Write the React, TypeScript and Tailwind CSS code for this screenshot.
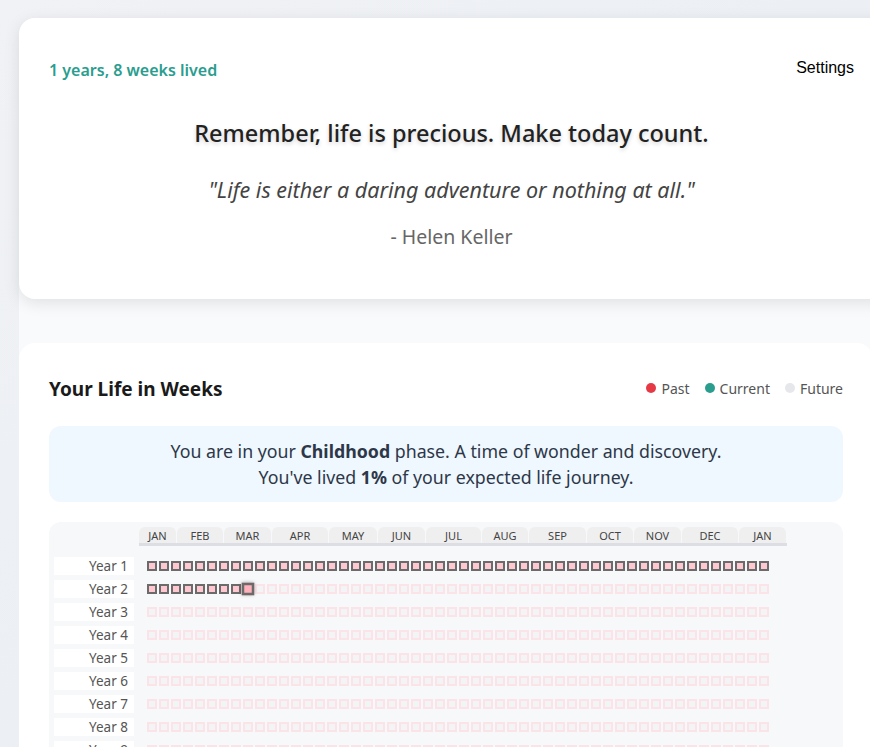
import React from "react";

const months: [string, number][] = [
  ["JAN", 38], ["FEB", 47], ["MAR", 48], ["APR", 57], ["MAY", 49], ["JUN", 48],
  ["JUL", 56], ["AUG", 47], ["SEP", 58], ["OCT", 47], ["NOV", 48], ["DEC", 57], ["JAN", 48],
];

function Cell({ kind }: { kind: "past" | "current" | "future" }) {
  if (kind === "past")
    return <div className="w-[10px] h-[10px] shrink-0 border-2 border-[#6b6b6b] bg-[#ffc8d0]" />;
  if (kind === "current")
    return (
      <div className="w-[10px] h-[10px] shrink-0 border-2 border-[#6a6a6a] bg-[#ffb0bb] scale-[1.25] shadow-[0_0_3px_rgba(0,0,0,0.35)]" />
    );
  return <div className="w-[10px] h-[10px] shrink-0 border-2 border-[#fbe3e7] bg-[#f3f4f6]" />;
}

export default function App() {
  const years = Array.from({ length: 10 }, (_, i) => i + 1);
  return (
    <div className="w-full h-[747px] overflow-hidden bg-gradient-to-br from-[#f0f2f5] via-[#eceff4] to-[#dce2ec] font-['Segoe_UI','Noto_Sans',sans-serif]">
      <div className="pl-[19px] pt-[18px]">
        <div className="w-[876px] bg-[#f9fafb] rounded-2xl">
          {/* Top card */}
          <div className="w-[876px] h-[281px] bg-white rounded-2xl shadow-[0_4px_16px_rgba(0,0,0,0.10)] pt-10 pl-[30px] pr-[41px]">
            <div className="flex items-center justify-between h-6">
              <div className="text-[16px] font-semibold text-[#2a9d8f] leading-6">1 years, 8 weeks lived</div>
              <div className="font-['Liberation_Sans',Arial,sans-serif] text-[16px] text-black -mt-[5px]">Settings</div>
            </div>
            <div className="mt-[35px] text-center text-[23.5px] leading-8 font-medium text-[#222] [text-shadow:0_2px_4px_rgba(0,0,0,0.18)]">
              Remember, life is precious. Make today count.
            </div>
            <div className="mt-[26px] text-center text-[21.5px] leading-[30px] italic text-[#444]">
              "Life is either a daring adventure or nothing at all."
            </div>
            <div className="mt-[18px] text-center text-[19.5px] leading-7 text-[#666]">- Helen Keller</div>
          </div>

          {/* Section */}
          <div className="mt-[44px] w-[854px] bg-white rounded-2xl pt-8 px-[30px] pb-6">
            <div className="flex items-center justify-between h-7">
              <div className="text-[19px] font-bold text-[#1a1a1a]">Your Life in Weeks</div>
              <div className="flex items-center gap-[15px] text-[14px] text-[#555] -mt-[2px]">
                <div className="flex items-center gap-[5px]">
                  <span className="w-[10px] h-[10px] rounded-full bg-[#e63946]" />
                  Past
                </div>
                <div className="flex items-center gap-[5px]">
                  <span className="w-[10px] h-[10px] rounded-full bg-[#2a9d8f]" />
                  Current
                </div>
                <div className="flex items-center gap-[5px]">
                  <span className="w-[10px] h-[10px] rounded-full bg-[#e5e7eb]" />
                  Future
                </div>
              </div>
            </div>

            <div className="mt-[23px] bg-[#eff7ff] rounded-xl py-3 text-center text-[17.75px] leading-[26px] text-[#2d3748]">
              <div>
                You are in your <b>Childhood</b> phase. A time of wonder and discovery.
              </div>
              <div>
                You've lived <b>1%</b> of your expected life journey.
              </div>
            </div>

            <div className="mt-5 bg-[#f7f8fa] rounded-xl pt-[5px] pl-[5px] pb-4">
              <div className="flex">
                <div className="w-[80px] shrink-0" />
                <div className="ml-[5px] flex border-b-[3px] border-[#dcdee4]">
                  {months.map(([m, w], i) => (
                    <div key={i} style={{ width: w }} className="pr-px">
                      <div className="h-4 rounded-t-md bg-[#efefef] flex items-center justify-center text-[11px] text-[#444] leading-none">
                        {m}
                      </div>
                    </div>
                  ))}
                </div>
              </div>
              <div className="mt-[11px] flex flex-col gap-[5px]">
                {years.map((y) => (
                  <div key={y} className="flex items-center">
                    <div className="w-[80px] h-[18px] shrink-0 bg-white text-right pr-[6px] text-[13.5px] leading-[18px] text-[#555]">
                      Year {y}
                    </div>
                    <div className="ml-[13px] flex gap-[2px]">
                      {Array.from({ length: 52 }, (_, i) => {
                        let kind: "past" | "current" | "future" = "future";
                        if (y === 1) kind = "past";
                        else if (y === 2) kind = i < 8 ? "past" : i === 8 ? "current" : "future";
                        return <Cell key={i} kind={kind} />;
                      })}
                    </div>
                  </div>
                ))}
              </div>
            </div>
          </div>
        </div>
      </div>
    </div>
  );
}
